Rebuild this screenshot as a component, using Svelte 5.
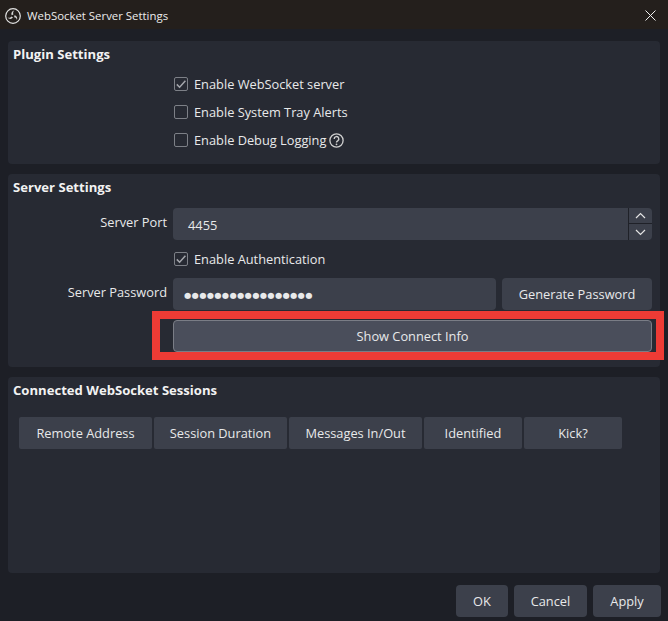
<script>
  const headers = [
    { label: 'Remote Address', width: 133 },
    { label: 'Session Duration', width: 133 },
    { label: 'Messages In/Out', width: 133 },
    { label: 'Identified', width: 98 },
    { label: 'Kick?', width: 98 }
  ];
</script>

<div class="dialog">
  <header class="titlebar">
    <svg class="logo" width="16" height="16" viewBox="0 0 16 16" fill="none">
      <circle cx="8" cy="8" r="7.3" stroke="#e2e2e2" stroke-width="1.2" />
      <path d="M6.6 7.2C5.8 5 7 3 9.4 2.6 8.2 3.6 7.7 5 8.4 6.4z" fill="#d6d6d6" />
      <path d="M6.6 7.2C5.8 5 7 3 9.4 2.6 8.2 3.6 7.7 5 8.4 6.4z" fill="#d6d6d6" transform="rotate(120 8 8)" />
      <path d="M6.6 7.2C5.8 5 7 3 9.4 2.6 8.2 3.6 7.7 5 8.4 6.4z" fill="#d6d6d6" transform="rotate(240 8 8)" />
    </svg>
    <span class="title">WebSocket Server Settings</span>
    <svg class="close" width="11" height="11" viewBox="0 0 11 11">
      <path d="M.5.5l10 10M10.5.5l-10 10" stroke="#f0f0f0" stroke-width="1" />
    </svg>
  </header>

  <main class="content">
    <section class="group plugin">
      <h2>Plugin Settings</h2>
      <div class="form">
        <label class="check">
          <span class="box">
            <svg width="12" height="12" viewBox="0 0 12 12" fill="none"><path d="M1.8 6.4l2.8 2.8L10.4 2.8" stroke="#a4a6ac" stroke-width="1.5" /></svg>
          </span>
          Enable WebSocket server
        </label>
        <label class="check"><span class="box"></span>Enable System Tray Alerts</label>
        <label class="check">
          <span class="box"></span>Enable Debug Logging
          <svg class="help" width="15" height="15" viewBox="0 0 15 15" fill="none">
            <circle cx="7.5" cy="7.5" r="6.6" stroke="#cfcfcf" stroke-width="1.3" />
            <path d="M5.2 5.9a2.3 2.3 0 1 1 3.5 1.9c-.8.5-1.2.9-1.2 1.6" stroke="#cfcfcf" stroke-width="1.4" />
            <circle cx="7.5" cy="11.3" r=".9" fill="#cfcfcf" />
          </svg>
        </label>
      </div>
    </section>

    <section class="group server">
      <h2>Server Settings</h2>
      <div class="rows">
        <div class="row port">
          <span class="label">Server Port</span>
          <div class="field spin">
            <span class="value">4455</span>
            <div class="arrows">
              <span class="arrow">
                <svg width="11" height="7" viewBox="0 0 11 7" fill="none"><path d="M1 6l4.5-4.5L10 6" stroke="#e4e4e4" stroke-width="1.2" /></svg>
              </span>
              <span class="arrow">
                <svg width="11" height="7" viewBox="0 0 11 7" fill="none"><path d="M1 1l4.5 4.5L10 1" stroke="#e4e4e4" stroke-width="1.2" /></svg>
              </span>
            </div>
          </div>
        </div>
        <div class="row auth">
          <span class="label"></span>
          <label class="check">
            <span class="box">
              <svg width="12" height="12" viewBox="0 0 12 12" fill="none"><path d="M1.8 6.4l2.8 2.8L10.4 2.8" stroke="#a4a6ac" stroke-width="1.5" /></svg>
            </span>
            Enable Authentication
          </label>
        </div>
        <div class="row pass">
          <span class="label">Server Password</span>
          <div class="field password">
            <span class="dots">●●●●●●●●●●●●●●●●●</span>
          </div>
          <button class="btn generate">Generate Password</button>
        </div>
        <div class="row connect">
          <span class="label"></span>
          <button class="btn info">Show Connect Info</button>
          <div class="highlight"></div>
        </div>
      </div>
    </section>

    <section class="group sessions">
      <h2>Connected WebSocket Sessions</h2>
      <div class="table-head">
        {#each headers as h}
          <div class="th" style="width: {h.width}px">{h.label}</div>
        {/each}
      </div>
    </section>
  </main>

  <footer class="actions">
    <button class="btn ok">OK</button>
    <button class="btn cancel">Cancel</button>
    <button class="btn apply">Apply</button>
  </footer>
</div>

<style>
  :global(body) {
    margin: 0;
    background: #1d1f26;
  }

  .dialog {
    width: 668px;
    height: 621px;
    overflow: hidden;
    background: #1d1f26;
    color: #e8e9ea;
    font-family: "Open Sans", sans-serif;
    font-size: 12.8px;
    line-height: 18px;
  }

  .titlebar {
    display: flex;
    align-items: center;
    height: 29px;
    padding: 2px 12px 0 5px;
    box-sizing: border-box;
    background: #241f1c;
    font-size: 11.4px;
    color: #ececec;
  }

  .logo {
    margin-right: 6px;
  }

  .title {
    flex: 1;
  }

  .content {
    display: flex;
    flex-direction: column;
    gap: 10px;
    padding: 12px 8px 0;
  }

  .group {
    background: #272a33;
    border-radius: 4px;
    padding: 4px 5px;
  }

  .plugin {
    height: 123px;
    box-sizing: border-box;
  }

  .server {
    height: 193px;
    box-sizing: border-box;
  }

  .sessions {
    height: 196px;
    box-sizing: border-box;
  }

  h2 {
    margin: 0;
    font-size: 13.1px;
    line-height: 18px;
    font-weight: 700;
    color: #f2f2f2;
  }

  .form {
    display: flex;
    flex-direction: column;
    gap: 10px;
    padding: 12px 0 0 161px;
  }

  .check {
    display: flex;
    align-items: center;
    height: 18px;
  }

  .box {
    display: flex;
    align-items: center;
    justify-content: center;
    box-sizing: border-box;
    width: 14px;
    height: 14px;
    margin-right: 6px;
    border: 1px solid #7d8087;
    border-radius: 2px;
  }

  .auth .check {
    margin-left: 1px;
  }

  .help {
    margin-left: 3px;
  }

  .rows {
    display: flex;
    flex-direction: column;
    margin-top: 12px;
  }

  .row {
    display: flex;
    align-items: center;
    padding-right: 3px;
  }

  .label {
    flex: none;
    width: 154px;
    margin-right: 6px;
    text-align: right;
  }

  .port {
    height: 32px;
  }

  .port .label {
    margin-top: -4px;
  }

  .auth {
    height: 38px;
  }

  .pass {
    height: 32px;
  }

  .pass .label {
    margin-top: -4px;
  }

  .connect {
    position: relative;
    height: 32px;
    margin-top: 10px;
  }

  .field {
    display: flex;
    align-items: center;
    flex: 1;
    box-sizing: border-box;
    height: 32px;
    background: #3c404b;
    border-radius: 4px;
  }

  .spin {
    position: relative;
    padding-left: 15px;
  }

  .value {
    flex: 1;
    padding-top: 1px;
  }

  .arrows {
    display: flex;
    flex-direction: column;
    width: 23px;
    height: 32px;
    border-left: 1px solid #1f2128;
  }

  .arrow {
    display: flex;
    align-items: center;
    justify-content: center;
    height: 16px;
  }

  .arrow:first-child {
    border-bottom: 1px solid #1f2128;
    box-sizing: border-box;
  }

  .password {
    padding-left: 11px;
    margin-right: 6px;
  }

  .dots {
    font-family: "DejaVu Sans", sans-serif;
    font-size: 8.2px;
    letter-spacing: 0.43px;
    padding-top: 2px;
  }

  .btn {
    box-sizing: border-box;
    height: 32px;
    padding: 0;
    background: #3c404b;
    border: none;
    border-radius: 4px;
    color: #e8e9ea;
    font: inherit;
  }

  .generate {
    flex: none;
    width: 150px;
  }

  .info {
    flex: 1;
    background: #4a4e5b;
    border: 1px solid #7a7d86;
  }

  .highlight {
    position: absolute;
    left: 139px;
    right: -9px;
    top: -9px;
    bottom: -8px;
    border: 8px solid #ee3b35;
    pointer-events: none;
  }

  .table-head {
    display: flex;
    gap: 2px;
    margin: 18px 0 0 6px;
  }

  .th {
    display: flex;
    align-items: center;
    justify-content: center;
    height: 32px;
    background: #3c404b;
    border-radius: 2px;
  }

  .actions {
    display: flex;
    justify-content: flex-end;
    gap: 6px;
    padding: 12px 7px 0;
  }

  .ok {
    width: 52px;
  }

  .cancel {
    width: 73px;
  }

  .apply {
    width: 68px;
  }
</style>
